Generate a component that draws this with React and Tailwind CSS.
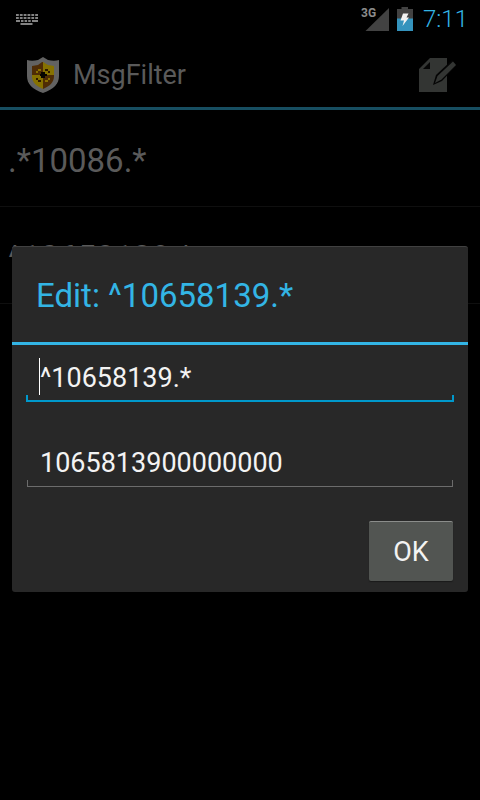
import React from "react";

function KeyboardIcon() {
  return (
    <svg width="22" height="12" viewBox="0 0 22 12" fill="none" stroke="#838383" strokeWidth="2" aria-hidden="true">
      <path d="M0 2h22M0 5h22" strokeDasharray="2.800 1.040" />
      <path d="M0 8h4M5 8h2.500M8.600 8h2.500M12.200 8h2.500M16 8h6" />
      <path d="M4.500 11h12" />
    </svg>
  );
}

function SignalIcon() {
  return (
    <svg width="24" height="23" viewBox="0 0 24 23" aria-hidden="true">
      <path d="M24 0V23H0.500z" fill="#424242" />
    </svg>
  );
}

function BatteryIcon() {
  return (
    <svg width="16" height="24" viewBox="0 0 16 24" aria-hidden="true">
      <path d="M0 2h4.500V0h6.500v2h5v22H0z" fill="#424242" />
      <path d="M0 11.500h16V24H0z" fill="#3493bd" />
      <path d="M6 6.500h5.500L9.500 10.500H12L5.500 19L7 13.500H3.500z" fill="#f2f2f2" />
    </svg>
  );
}

function ShieldIcon() {
  return (
    <svg width="32" height="36" viewBox="0 0 32 36" aria-hidden="true">
      <path d="M16 0L21 3C25 4 29 4 32 3V19C32 27 27 32 16 36C5 32 0 27 0 19V3C3 4 7 4 11 3z" fill="#626262" />
      <path d="M16 5H15L11 8L5 9V18H16z" fill="#4f2c05" />
      <path d="M16 5L21 8L27 9V18H16z" fill="#867100" />
      <path d="M5 18H16V32C9 29 5 25 5 19z" fill="#867100" />
      <path d="M16 18H27V19C27 25 23 29 16 32z" fill="#4f2c05" />
      <path d="M14 15h4v2h2v2h-2v2h-4v-2h-1v-2h1z" fill="#080500" />
      <path d="M11 12h3v2h-3zM9 14h2v2H9z" fill="#8a7000" />
      <path d="M9 21h2v2H9zM11 23h3v2h-3z" fill="#2d1800" />
      <path d="M18 12h3v2h-3zM21 14h2v2h-2z" fill="#2d1800" />
      <path d="M18 23h3v2h-3zM21 21h2v2h-2z" fill="#8a7000" />
    </svg>
  );
}

function ComposeIcon() {
  return (
    <svg width="38" height="36" viewBox="0 0 38 36" aria-hidden="true">
      <path d="M12 1H29V35H1V12z" fill="#333533" />
      <path d="M12 5V12H5z" fill="#050505" />
      <path d="M34 3L39 8L24 24L15 28L18 18z" fill="#050505" />
      <path d="M35 4.500L38 8L23.500 22.500L17 26L19.500 19z" fill="#333533" />
    </svg>
  );
}

function StatusBar() {
  return (
    <div className="flex h-[38px] items-center justify-between pr-3 pl-4">
      <KeyboardIcon />
      <div className="flex items-center">
        <div className="relative">
          <SignalIcon />
          <span className="absolute -top-px -left-1 text-xs leading-3 font-bold text-[#8c8c8c]">3G</span>
        </div>
        <div className="ml-2">
          <BatteryIcon />
        </div>
        <span className="ml-[10px] text-2xl font-light text-[#33b5e5]">7:11</span>
      </div>
    </div>
  );
}

function Field({ label, value, active }) {
  const edge = active ? "border-[#0099cc]" : "border-[#6c6c6c]";
  return (
    <div className={active ? "relative mx-[14px]" : "relative mx-[15px]"}>
      <input
        aria-label={label}
        defaultValue={value}
        className={
          active
            ? "block h-[57px] w-full border-b-2 border-[#0099cc] bg-transparent px-[14px] pt-[10px] text-[27px] text-[#f3f3f3] outline-none"
            : "block h-[57px] w-full border-b border-[#6c6c6c] bg-transparent px-[13px] pt-[10px] text-[27px] text-[#f3f3f3] outline-none"
        }
      />
      <span className={`absolute bottom-0 left-0 h-[7px] ${active ? "border-l-2" : "border-l"} ${edge}`} />
      <span className={`absolute right-0 bottom-0 h-[7px] ${active ? "border-l-2" : "border-l"} ${edge}`} />
      {active && <span className="absolute bottom-[7px] left-[13px] h-[37px] w-px bg-white" />}
    </div>
  );
}

function EditDialog() {
  return (
    <div className="absolute inset-x-0 top-[38px] bottom-0 flex items-center px-3">
      <section
        role="dialog"
        aria-labelledby="dialog-title"
        className="w-full rounded-[3px] border-t border-[#414141] bg-[#282828]"
      >
        <h2
          id="dialog-title"
          className="flex h-[98px] items-center border-b-3 border-[#33b5e5] px-6 pt-[2px] text-[33px] text-[#33b5e5]"
        >
          Edit: ^10658139.*
        </h2>
        <form onSubmit={(event) => event.preventDefault()}>
          <Field label="Pattern" value="^10658139.*" active />
          <div className="mt-7">
            <Field label="Test number" value="1065813900000000" />
          </div>
          <div className="flex justify-end pt-[34px] pr-[15px] pb-[11px]">
            <button className="h-[60px] w-[84px] rounded-[2px] border-t border-[#8b8d8b] bg-[#525552] pt-px text-[27px] text-[#f3f3f3] shadow-[0_1px_1px_#1a1a1a]">
              OK
            </button>
          </div>
        </form>
      </section>
    </div>
  );
}

export default function App() {
  return (
    <div className="relative min-h-screen bg-black font-['Roboto',sans-serif]">
      <StatusBar />
      <header className="flex h-[72px] items-center justify-between border-b-3 border-[#174e61] pt-1 pr-[24px] pl-[27px]">
        <div className="flex items-center gap-[14px]">
          <ShieldIcon />
          <h1 className="pt-[2px] text-[27px] text-[#5a5a5a]">MsgFilter</h1>
        </div>
        <button aria-label="Edit">
          <ComposeIcon />
        </button>
      </header>
      <ul className="text-[33px] text-[#5a5a5a]">
        <li className="flex h-[97px] items-center border-b border-[#0f0f0f] px-2 pt-[5px]">.*10086.*</li>
        <li className="flex h-[97px] items-center border-b border-[#0f0f0f] px-2 pt-[5px]">^10658139.*</li>
      </ul>
      <EditDialog />
    </div>
  );
}
